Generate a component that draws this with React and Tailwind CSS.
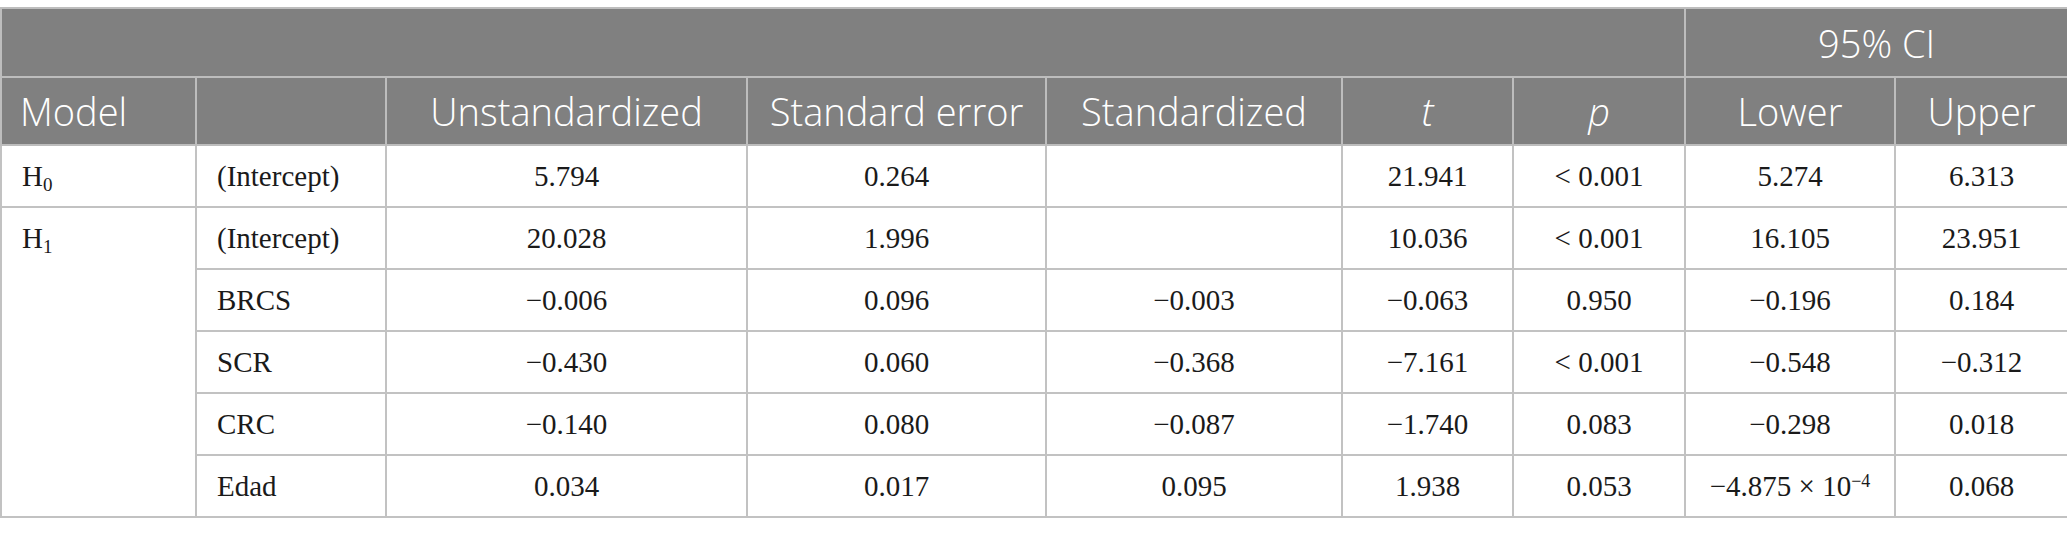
import React from "react";

const cols = [195, 190, 361, 299, 296, 171, 172, 210, 173];

const rows = [
  ["(Intercept)", "20.028", "1.996", "", "10.036", "< 0.001", "16.105", "23.951"],
  ["BRCS", "\u22120.006", "0.096", "\u22120.003", "\u22120.063", "0.950", "\u22120.196", "0.184"],
  ["SCR", "\u22120.430", "0.060", "\u22120.368", "\u22127.161", "< 0.001", "\u22120.548", "\u22120.312"],
  ["CRC", "\u22120.140", "0.080", "\u22120.087", "\u22121.740", "0.083", "\u22120.298", "0.018"],
  ["Edad", "0.034", "0.017", "0.095", "1.938", "0.053", "LOW", "0.068"],
];

const th = "border-2 border-[#bdbdbd] bg-[#808080] text-white font-light text-[38px] leading-[44px] px-[18px]";
const td = "border-2 border-[#c2c2c2] text-[#1a1a1a] text-[29px] leading-[34px] px-[20px]";

const Cell = ({ value }) => {
  if (value === "LOW") {
    return (
      <td className={`${td} text-center`}>
        {"\u22124.875 \u00d7 10"}
        <sup className="text-[18px]">{"\u22124"}</sup>
      </td>
    );
  }
  return <td className={`${td} text-center`}>{value}</td>;
};

export default function App() {
  return (
    <div className="w-[2067px] bg-white pt-[7px]">
      <table
        className="w-[2067px] table-fixed border-collapse"
        style={{ fontFamily: '"Liberation Serif", serif' }}
      >
        <colgroup>
          {cols.map((w, i) => (
            <col key={i} style={{ width: w }} />
          ))}
        </colgroup>
        <thead style={{ fontFamily: '"Open Sans", sans-serif' }}>
          <tr className="h-[69px]">
            <th colSpan={7} className={`${th} border-r-0`}></th>
            <th colSpan={2} className={`${th} text-center`}>95% CI</th>
          </tr>
          <tr className="h-[68px]">
            <th className={`${th} text-left`}>Model</th>
            <th className={th}></th>
            <th className={`${th} text-center`}>Unstandardized</th>
            <th className={`${th} text-center`}>Standard error</th>
            <th className={`${th} text-center`}>Standardized</th>
            <th className={`${th} text-center italic`}>t</th>
            <th className={`${th} text-center italic`}>p</th>
            <th className={`${th} text-center`}>Lower</th>
            <th className={`${th} text-center`}>Upper</th>
          </tr>
        </thead>
        <tbody>
          <tr className="h-[62px]">
            <td className={`${td} text-left`}>
              H<sub className="text-[19px]">0</sub>
            </td>
            <td className={`${td} text-left`}>(Intercept)</td>
            <Cell value="5.794" />
            <Cell value="0.264" />
            <Cell value="" />
            <Cell value="21.941" />
            <Cell value="< 0.001" />
            <Cell value="5.274" />
            <Cell value="6.313" />
          </tr>
          {rows.map((r, i) => (
            <tr key={i} className="h-[62px]">
              {i === 0 && (
                <td rowSpan={5} className={`${td} text-left align-top`}>
                  <div className="h-[60px] flex items-center">
                    <span>
                      H<sub className="text-[19px]">1</sub>
                    </span>
                  </div>
                </td>
              )}
              <td className={`${td} text-left`}>{r[0]}</td>
              {r.slice(1).map((v, j) => (
                <Cell key={j} value={v} />
              ))}
            </tr>
          ))}
        </tbody>
      </table>
    </div>
  );
}
